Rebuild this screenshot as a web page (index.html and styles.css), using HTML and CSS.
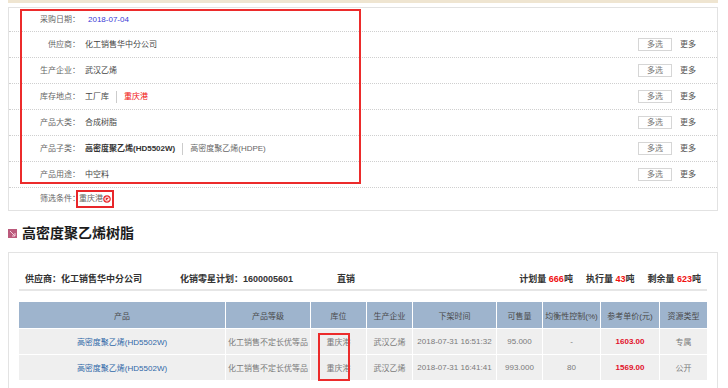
FILE: index.html
```html
<!DOCTYPE html>
<html lang="zh-CN">
<head>
    <meta charset="UTF-8">
    <title>资源筛选</title>
    <link rel="stylesheet" href="styles.css">
</head>
<body>
    <div class="topbar"></div>

    <!-- 筛选条件 -->
    <div class="filter">
        <div class="mark filter-mark"></div>
        <div class="row first">
            <span class="label">采购日期：</span>
            <span class="value date">2018-07-04</span>
        </div>
        <div class="row">
            <span class="label">供应商：</span>
            <span class="value">化工销售华中分公司</span>
            <span class="ops"><button type="button" class="multi">多选</button><a class="more">更多</a></span>
        </div>
        <div class="row">
            <span class="label">生产企业：</span>
            <span class="value">武汉乙烯</span>
            <span class="ops"><button type="button" class="multi">多选</button><a class="more">更多</a></span>
        </div>
        <div class="row">
            <span class="label">库存地点：</span>
            <span class="value">工厂库<i class="sep"></i><span class="on">重庆港</span></span>
            <span class="ops"><button type="button" class="multi">多选</button><a class="more">更多</a></span>
        </div>
        <div class="row">
            <span class="label">产品大类：</span>
            <span class="value">合成树脂</span>
            <span class="ops"><button type="button" class="multi">多选</button><a class="more">更多</a></span>
        </div>
        <div class="row">
            <span class="label">产品子类：</span>
            <span class="value"><b>高密度聚乙烯(HD5502W)</b><i class="sep"></i><span class="sub">高密度聚乙烯(HDPE)</span></span>
            <span class="ops"><button type="button" class="multi">多选</button><a class="more">更多</a></span>
        </div>
        <div class="row">
            <span class="label">产品用途：</span>
            <span class="value">中空料</span>
            <span class="ops"><button type="button" class="multi">多选</button><a class="more">更多</a></span>
        </div>
        <div class="row last">
            <span class="label">筛选条件：</span>
            <span class="tag">重庆港<svg class="del" width="8" height="8" viewBox="0 0 8 8"><circle cx="4" cy="4" r="3.2" fill="none" stroke="#e8262a" stroke-width="1.2"/><path d="M2.6 2.6 L5.4 5.4 M5.4 2.6 L2.6 5.4" stroke="#e8262a" stroke-width="1.1"/></svg></span>
        </div>
    </div>

    <h2 class="title">
        <svg class="title-icon" width="9" height="9" viewBox="0 0 9 9"><rect width="9" height="9" fill="#bb5a7c"/><path d="M2 2 L7 7 M7 4 L7 7 L4 7" fill="none" stroke="#f3cdd9" stroke-width="1"/></svg>
        高密度聚乙烯树脂
    </h2>

    <!-- 资源列表 -->
    <div class="resource">
        <div class="summary">
            <span class="supplier">供应商：化工销售华中分公司</span>
            <span class="plan">化销零星计划：1600005601</span>
            <span class="kind">直销</span>
            <span class="amounts">
                <span>计划量 <em>666</em>吨</span>
                <span>执行量 <em>43</em>吨</span>
                <span>剩余量 <em>623</em>吨</span>
            </span>
        </div>
        <div class="table-wrap">
            <table class="list">
                <thead>
                    <tr>
                        <th class="c1">产品</th>
                        <th class="c2">产品等级</th>
                        <th class="c3">库位</th>
                        <th class="c4">生产企业</th>
                        <th class="c5">下架时间</th>
                        <th class="c6">可售量</th>
                        <th class="c7">均衡性控制(%)</th>
                        <th class="c8">参考单价(元)</th>
                        <th class="c9">资源类型</th>
                    </tr>
                </thead>
                <tbody>
                    <tr>
                        <td><a class="prod">高密度聚乙烯(HD5502W)</a></td>
                        <td>化工销售不定长优等品</td>
                        <td>重庆港</td>
                        <td>武汉乙烯</td>
                        <td>2018-07-31 16:51:32</td>
                        <td>95.000</td>
                        <td>-</td>
                        <td class="price">1603.00</td>
                        <td>专属</td>
                    </tr>
                    <tr>
                        <td><a class="prod">高密度聚乙烯(HD5502W)</a></td>
                        <td>化工销售不定长优等品</td>
                        <td>重庆港</td>
                        <td>武汉乙烯</td>
                        <td>2018-07-31 16:41:41</td>
                        <td>993.000</td>
                        <td>80</td>
                        <td class="price">1569.00</td>
                        <td>公开</td>
                    </tr>
                </tbody>
            </table>
            <div class="mark cell-mark"></div>
        </div>
    </div>
</body>
</html>
```

FILE: styles.css
```css
body
{
    margin: 0;
    font-family: "Liberation Sans", "Noto Sans CJK SC", sans-serif;
    font-size: 8px;
    color: #333;
    background-color: #fff;
}

/* 顶部色条 */
div.topbar
{
    height: 3px;
    margin: 0 10px 0 8px;
    background-color: #efe5d1;
}

/* 筛选区域 */
div.filter
{
    position: relative;
    margin: 4px 10px 0 8px;
    border: 1px solid #e2e2e2;
}

div.filter div.row
{
    display: flex;
    align-items: center;
    height: 25px;
    line-height: 12px;
    border-bottom: 1px dotted #cfcfcf;
}
div.filter div.row.first
{
    height: 23px;
}
div.filter div.row.last
{
    height: 22px;
    border-bottom: none;
}

div.filter span.label
{
    width: 71px;
    text-align: right;
    color: #666;
    flex-shrink: 0;
}
div.filter span.value
{
    display: flex;
    align-items: center;
    margin-left: 5px;
    color: #444;
}
div.filter span.date
{
    padding-left: 3px;
    color: #3a3ad6;
}
div.filter span.value b
{
    color: #333;
}
div.filter span.value span.sub
{
    color: #666;
}
div.filter span.value span.on
{
    color: #f01010;
}
div.filter i.sep
{
    display: inline-block;
    width: 1px;
    height: 12px;
    margin: 0 7px;
    background-color: #ccc;
}

div.filter span.ops
{
    display: flex;
    align-items: center;
    margin-left: auto;
    margin-right: 21px;
}
div.filter button.multi
{
    width: 34px;
    height: 13px;
    padding: 0;
    margin-right: 8px;
    border: 1px solid #d6d6d6;
    background-color: #fff;
    font-family: inherit;
    font-size: 8px;
    line-height: 11px;
    color: #777;
}
div.filter a.more
{
    color: #555;
}

div.filter span.tag
{
    display: inline-flex;
    align-items: center;
    height: 18px;
    margin-left: -4px;
    padding: 0 1px;
    border: 2px solid #e8262a;
    box-sizing: border-box;
    color: #666;
}
div.filter span.tag svg.del
{
    margin-left: 0;
}

/* 빨간 표시 틀 */
div.mark
{
    position: absolute;
    border: 2px solid #ec2b2b;
    box-sizing: border-box;
}
div.filter-mark
{
    left: 11px;
    top: 1px;
    width: 341px;
    height: 175px;
}

/* 标题 */
h2.title
{
    display: flex;
    align-items: center;
    margin: 12px 0 9px 8px;
    font-size: 14px;
    line-height: 20px;
    font-weight: bold;
    color: #1c1c1c;
}
h2.title svg.title-icon
{
    margin-right: 5px;
}

/* 资源列表 */
div.resource
{
    margin: 0 10px 0 8px;
    padding: 0 10px 12px;
    border: 1px solid #e3e3e3;
}

div.resource div.summary
{
    display: flex;
    padding: 20px 6px 4px;
    line-height: 12px;
    font-size: 9px;
    font-weight: bold;
    color: #333;
    border-bottom: 2px solid #e6e6e6;
}
div.summary span.supplier
{
    width: 155px;
}
div.summary span.plan
{
    width: 157px;
}
div.summary span.amounts
{
    display: flex;
    gap: 13px;
    margin-left: auto;
}
div.summary em
{
    font-style: normal;
    color: #f01010;
}

div.table-wrap
{
    position: relative;
    margin-top: 11px;
}
table.list
{
    width: 688px;
    border-collapse: separate;
    border-spacing: 0;
    table-layout: fixed;
}
table.list th,
table.list td
{
    padding: 0;
    text-align: center;
    border-right: 1px solid #fff;
    border-bottom: 1px solid #fff;
    box-sizing: border-box;
    white-space: nowrap;
    overflow: hidden;
}
table.list th:last-child,
table.list td:last-child
{
    border-right: none;
}
table.list th
{
    height: 27px;
    background-color: #9eb4cd;
    font-weight: normal;
    color: #4a4a4a;
}
table.list td
{
    height: 26px;
    background-color: #efefef;
    color: #7a7a7a;
}
table.list td a.prod
{
    color: #2f68a8;
}
table.list td.price
{
    color: #e2122a;
    font-weight: bold;
}

th.c1 { width: 207px; }
th.c2 { width: 85px; }
th.c3 { width: 56px; }
th.c4 { width: 46px; }
th.c5 { width: 84px; }
th.c6 { width: 46px; }
th.c7 { width: 58px; }
th.c8 { width: 59px; }
th.c9 { width: 47px; }

div.cell-mark
{
    left: 299px;
    top: 31px;
    width: 32px;
    height: 48px;
}
```
